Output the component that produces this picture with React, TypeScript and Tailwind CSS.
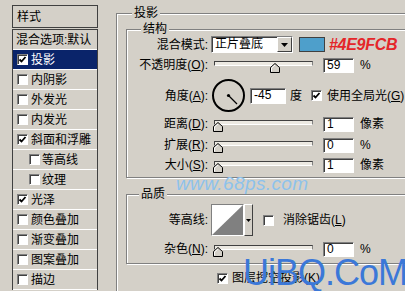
import React from 'react';

const FONT = { fontFamily: '"Liberation Sans","Noto Sans CJK SC",sans-serif' };

function Check({ checked = false }: { checked?: boolean }) {
  return (
    <span className="inline-flex w-[11px] h-[11px] shrink-0 items-center justify-center bg-white border border-t-[#808080] border-l-[#808080] border-b-white border-r-white shadow-[inset_1px_1px_0_#404040]">
      {checked && (
        <svg width="9" height="9" viewBox="0 0 9 9">
          <path d="M1.5 4.5 L3.5 6.5 L7.5 2" stroke="#000" strokeWidth="1.8" fill="none" />
        </svg>
      )}
    </span>
  );
}

function Field({ value, w = 31, h = 15 }: { value: string; w?: number; h?: number }) {
  return (
    <div
      className="bg-white border border-t-[#808080] border-l-[#808080] border-b-white border-r-white shadow-[inset_1px_1px_0_#404040] pl-[3px] text-[12px] leading-[13px] flex items-center"
      style={{ width: w, height: h }}
    >
      {value}
    </div>
  );
}

function Slider({ pos }: { pos: number }) {
  return (
    <div className="relative w-[102px] h-[16px] shrink-0">
      <div className="absolute left-[3px] right-0 top-[4px] h-[5px] bg-[#ece9e2] border border-t-[#404040] border-l-[#404040] border-b-white border-r-[#808080]" />
      <svg className="absolute top-[6px]" style={{ left: pos }} width="10" height="10" viewBox="0 0 10 10">
        <path d="M0.5 9.5 L0.5 4.5 L5 0.5 L9.5 4.5 L9.5 9.5 Z" fill="#d4d0c8" stroke="#000" strokeWidth="1" />
        <path d="M1.5 8.5 L1.5 5 L5 2" fill="none" stroke="#fff" strokeWidth="1" />
      </svg>
    </div>
  );
}

function Lbl({ text, k }: { text: string; k?: string }) {
  return (
    <div className="w-[81px] shrink-0 text-right whitespace-nowrap">
      {text}
      {k && (
        <>
          (<u>{k}</u>)
        </>
      )}
      :
    </div>
  );
}

const styles: { name: string; checked?: boolean; indent?: boolean; selected?: boolean }[] = [
  { name: '混合选项:默认' },
  { name: '投影', checked: true, selected: true },
  { name: '内阴影' },
  { name: '外发光' },
  { name: '内发光' },
  { name: '斜面和浮雕', checked: true },
  { name: '等高线', indent: true },
  { name: '纹理', indent: true },
  { name: '光泽', checked: true },
  { name: '颜色叠加' },
  { name: '渐变叠加' },
  { name: '图案叠加' },
  { name: '描边' },
];

const groupBox = 'border border-[#808080] shadow-[inset_1px_1px_0_#fff,1px_1px_0_#fff]';

export default function App() {
  return (
    <div className="relative w-[405px] h-[291px] overflow-hidden bg-[#d4d0c8] text-[12px] text-black flex" style={FONT}>
      {/* style list */}
      <div className="ml-[12px] mt-[5px] w-[86px] shrink-0 flex flex-col">
        <div className="h-[23px] border border-[#404040] pl-[4px] flex items-center">样式</div>
        <div className="mt-[1px] border-x border-t border-[#404040] flex flex-col">
          {styles.map((s, i) => (
            <div
              key={i}
              className={`h-[20px] flex items-center whitespace-nowrap overflow-hidden border-b border-white ${
                s.selected ? 'bg-[#0a246a] text-white' : ''
              } ${i === 0 ? 'pl-[3px]' : s.indent ? 'pl-[16px] gap-[1px]' : 'pl-[4px] gap-[3px]'}`}
            >
              {i > 0 && <Check checked={s.checked} />}
              <span className={s.indent ? 'ml-[1px]' : ''}>{s.name}</span>
            </div>
          ))}
        </div>
      </div>

      {/* 投影 group */}
      <div className={`relative ml-[18px] mt-[13px] w-[310px] h-[300px] shrink-0 flex flex-col ${groupBox}`}>
        <span className="absolute -top-[8px] left-[15px] px-[2px] bg-[#d4d0c8] leading-[14px]">投影</span>

        {/* 结构 */}
        <div className={`relative ml-[9px] mt-[15px] w-[300px] pt-[6px] pb-[4px] flex flex-col ${groupBox}`}>
          <span className="absolute -top-[8px] left-[14px] px-[2px] bg-[#d4d0c8] leading-[14px]">结构</span>

          <div className="h-[17px] flex items-center gap-[3px]">
            <Lbl text="混合模式" />
            <div className="w-[82px] h-[17px] flex bg-white border border-t-[#808080] border-l-[#808080] border-b-white border-r-white shadow-[inset_1px_1px_0_#404040]">
              <span className="flex-1 pl-[3px] leading-[15px]">正片叠底</span>
              <span className="w-[15px] h-[15px] bg-[#d4d0c8] border border-t-white border-l-white border-b-[#404040] border-r-[#404040] flex items-center justify-center">
                <svg width="7" height="4" viewBox="0 0 7 4">
                  <path d="M0 0 H7 L3.5 4 Z" fill="#000" />
                </svg>
              </span>
            </div>
            <div className="ml-[3px] w-[26px] h-[15px] bg-[#4e9fcb] border border-[#404040]" />
            <span className="ml-[1px] text-[16px] font-bold italic text-[#e4262a] leading-none tracking-[-0.3px]">#4E9FCB</span>
          </div>

          <div className="mt-[4px] h-[16px] flex items-center gap-[3px]">
            <Lbl text="不透明度" k="O" />
            <Slider pos={59} />
            <div className="ml-[7px]"><Field value="59" /></div>
            <span className="ml-[3px]">%</span>
          </div>

          <div className="mt-[5px] h-[35px] flex items-center gap-[3px]">
            <Lbl text="角度" k="A" />
            <svg width="35" height="35" viewBox="0 0 35 35">
              <circle cx="17.5" cy="17.5" r="15.5" fill="none" stroke="#000" strokeWidth="2" />
              <path d="M17.5 17.5 L26 26" stroke="#000" strokeWidth="1.3" />
              <circle cx="17.5" cy="17.5" r="1.6" fill="#000" />
            </svg>
            <div className="ml-[1px]"><Field value="-45" w={36} h={16} /></div>
            <span className="ml-[1px]">度</span>
            <div className="ml-[6px] flex items-center gap-[5px]">
              <Check checked />
              <span className="whitespace-nowrap">使用全局光(<u>G</u>)</span>
            </div>
          </div>

          {[
            { l: '距离', k: 'D', v: '1', u: '像素', mt: 'mt-[3px]' },
            { l: '扩展', k: 'R', v: '0', u: '%', mt: 'mt-[5px]' },
            { l: '大小', k: 'S', v: '1', u: '像素', mt: 'mt-[4px]' },
          ].map((r) => (
            <div key={r.l} className={`${r.mt} h-[16px] flex items-center gap-[3px]`}>
              <Lbl text={r.l} k={r.k} />
              <Slider pos={2} />
              <div className="ml-[7px]"><Field value={r.v} /></div>
              <span className="ml-[3px]">{r.u}</span>
            </div>
          ))}
        </div>

        {/* 品质 */}
        <div className={`relative ml-[9px] mt-[16px] w-[300px] pt-[9px] pb-[6px] flex flex-col ${groupBox}`}>
          <span className="absolute -top-[8px] left-[12px] px-[2px] bg-[#d4d0c8] leading-[14px]">品质</span>

          <div className="h-[32px] flex items-center gap-[3px]">
            <Lbl text="等高线" />
            <div className="flex h-[32px]">
              <div className="w-[33px] h-[32px] border border-t-[#808080] border-l-[#808080] border-b-white border-r-white">
                <svg width="31" height="30" viewBox="0 0 31 30" className="block">
                  <rect width="31" height="30" fill="#fff" />
                  <path d="M0 30 L31 0 L31 30 Z" fill="#808080" />
                </svg>
              </div>
              <div className="w-[9px] h-[32px] bg-[#d4d0c8] border border-t-white border-l-white border-b-[#404040] border-r-[#404040] flex items-center justify-center">
                <svg width="5" height="3" viewBox="0 0 5 3">
                  <path d="M0 0 H5 L2.5 3 Z" fill="#000" />
                </svg>
              </div>
            </div>
            <div className="ml-[7px] flex items-center gap-[9px]">
              <Check />
              <span className="whitespace-nowrap">消除锯齿(<u>L</u>)</span>
            </div>
          </div>

          <div className="mt-[5px] h-[16px] flex items-center gap-[3px]">
            <Lbl text="杂色" k="N" />
            <Slider pos={2} />
            <div className="ml-[7px]"><Field value="0" /></div>
            <span className="ml-[3px]">%</span>
          </div>
        </div>

        <div className="mt-[6px] ml-[100px] h-[16px] flex items-center gap-[4px]">
          <Check checked />
          <span className="whitespace-nowrap">图层挖空投影(<u>K</u>)</span>
        </div>
      </div>

      {/* watermarks */}
      <span className="absolute left-[176px] top-[174px] text-[19px] italic leading-none text-[#8dc2ec] tracking-[0.4px]">
        www.68ps.com
      </span>
      <span className="absolute left-[243px] top-[255px] text-[36px] leading-none text-[#3b78d8] tracking-[-1px]">
        UiBQ.CoM
      </span>
    </div>
  );
}
